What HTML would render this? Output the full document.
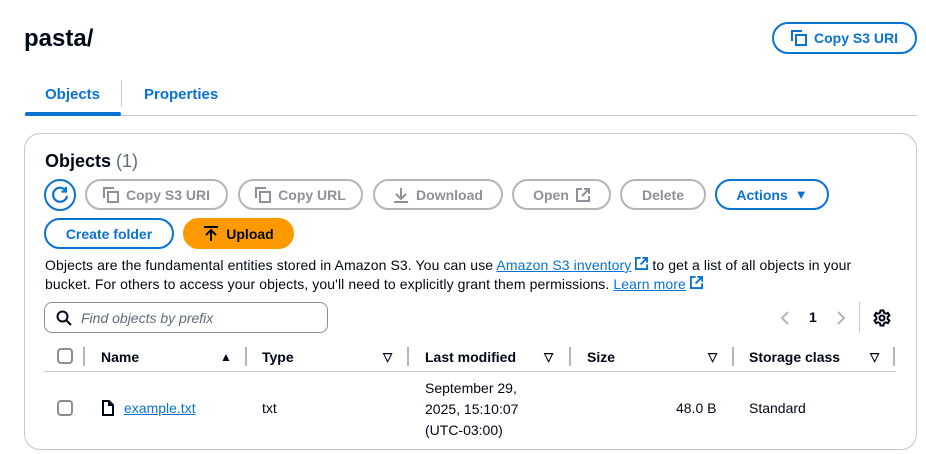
<!DOCTYPE html>
<html><head><meta charset="utf-8"><style>
*{box-sizing:border-box;margin:0;padding:0}
body{width:926px;height:454px;background:#fff;font-family:"Liberation Sans",sans-serif;color:#000716;position:relative;overflow:hidden;font-size:14px}
.a{position:absolute;white-space:nowrap}
.btn{position:absolute;height:31px;border:2px solid #b4b4bb;border-radius:16px;color:#8d9199;font-weight:bold;font-size:14px;display:flex;align-items:center;justify-content:center;gap:7px}
.blue{border-color:#0972d3;color:#0972d3}
.cb{position:absolute;width:16px;height:16px;border:2px solid #8c8c94;border-radius:4px}
.th{position:absolute;top:349px;font-weight:bold;font-size:14px}
.dv{position:absolute;top:347px;width:2px;height:19px;background:#b4b4bb}
.ar{position:absolute;top:350px;font-size:12px;font-weight:bold}
a{color:#0972d3;text-decoration:underline}
</style></head><body>
<div class="a" style="left:24px;top:25px;font-size:24px;font-weight:bold">pasta/</div>
<div class="btn blue" style="left:772px;top:22px;width:145px;height:32px">
<svg width="16" height="16" viewBox="0 0 16 16" fill="none" stroke="#0972d3" stroke-width="2"><path d="M1 11V1h10"/><rect x="5" y="5" width="10" height="10"/></svg>Copy S3 URI</div>
<div class="a" style="left:45px;top:86px;font-weight:bold;font-size:15px;color:#0972d3">Objects</div>
<div class="a" style="left:121px;top:80px;width:1px;height:27px;background:#c6c6cd"></div>
<div class="a" style="left:144px;top:86px;font-weight:bold;font-size:15px;color:#0972d3">Properties</div>
<div class="a" style="left:24px;top:115px;width:893px;height:1px;background:#c6c6cd"></div>
<div class="a" style="left:25px;top:112px;width:96px;height:4px;background:#0972d3;border-radius:2px"></div>

<div class="a" style="left:24px;top:133px;width:893px;height:317px;border:1px solid #c6c6cd;border-radius:16px"></div>
<div class="a" style="left:45px;top:151px;font-size:18px;font-weight:bold">Objects <span style="font-weight:normal;color:#5f6b7a">(1)</span></div>

<div class="a" style="left:44px;top:179px;width:32px;height:32px;border:2px solid #0972d3;border-radius:50%"><svg width="28" height="28" viewBox="0 0 28 28" fill="none" stroke="#0972d3" stroke-width="2.2"><path d="M20 10A7 7 0 1 0 21 15"/><path d="M20 6v4.5h-4.5"/></svg></div>
<div class="btn" style="left:85px;top:179px;width:143px"><svg width="16" height="16" viewBox="0 0 16 16" fill="none" stroke="#8d9199" stroke-width="2"><path d="M1 11V1h10"/><rect x="5" y="5" width="10" height="10"/></svg>Copy S3 URI</div>
<div class="btn" style="left:238px;top:179px;width:125px"><svg width="16" height="16" viewBox="0 0 16 16" fill="none" stroke="#8d9199" stroke-width="2"><path d="M1 11V1h10"/><rect x="5" y="5" width="10" height="10"/></svg>Copy URL</div>
<div class="btn" style="left:373px;top:179px;width:130px"><svg width="16" height="16" viewBox="0 0 16 16" fill="none" stroke="#8d9199" stroke-width="2"><path d="M8 1v10M3 7l5 5 5-5M1 15h14"/></svg>Download</div>
<div class="btn" style="left:512px;top:179px;width:99px">Open <svg width="14" height="14" viewBox="0 0 14 14" fill="none" stroke="#8d9199" stroke-width="2"><path d="M6 1H1v12h12V8M8 1h5v5M13 1L6 8"/></svg></div>
<div class="btn" style="left:620px;top:179px;width:86px">Delete</div>
<div class="btn blue" style="left:715px;top:179px;width:114px">Actions <span style="font-size:13px">▼</span></div>

<div class="btn blue" style="left:44px;top:218px;width:130px">Create folder</div>
<div class="btn" style="left:183px;top:218px;width:111px;background:#ff9900;border-color:#ff9900;color:#000716"><svg width="16" height="16" viewBox="0 0 16 16" fill="none" stroke="#000716" stroke-width="2"><path d="M1 1h14M8 15V5M3 9l5-5 5 5"/></svg>Upload</div>

<div class="a" style="left:45px;top:256px;line-height:19px;font-size:14px;letter-spacing:0.1px">Objects are the fundamental entities stored in Amazon S3. You can use <a>Amazon S3 inventory</a> <svg width="13" height="13" viewBox="0 0 14 14" fill="none" stroke="#0972d3" stroke-width="2"><path d="M6 1H1v12h12V8M8 1h5v5M13 1L6 8"/></svg> to get a list of all objects in your<br>bucket. For others to access your objects, you'll need to explicitly grant them permissions. <a>Learn more</a> <svg width="13" height="13" viewBox="0 0 14 14" fill="none" stroke="#0972d3" stroke-width="2"><path d="M6 1H1v12h12V8M8 1h5v5M13 1L6 8"/></svg></div>

<div class="a" style="left:44px;top:302px;width:284px;height:31px;border:1px solid #8c8c94;border-radius:8px"></div>
<svg class="a" style="left:56px;top:310px" width="16" height="16" viewBox="0 0 16 16" fill="none" stroke="#000716" stroke-width="2"><circle cx="6.5" cy="6.5" r="5"/><path d="M10 10l5 5"/></svg>
<div class="a" style="left:81px;top:310px;font-style:italic;color:#5f6b7a;font-size:14px">Find objects by prefix</div>
<svg class="a" style="left:779px;top:310px" width="12" height="16" viewBox="0 0 12 16" fill="none" stroke="#b4b4bb" stroke-width="2"><path d="M9 2L3 8l6 6"/></svg>
<div class="a" style="left:809px;top:309px;font-weight:bold">1</div>
<svg class="a" style="left:835px;top:310px" width="12" height="16" viewBox="0 0 12 16" fill="none" stroke="#b4b4bb" stroke-width="2"><path d="M3 2l6 6-6 6"/></svg>
<div class="a" style="left:859px;top:302px;width:1px;height:31px;background:#c6c6cd"></div>
<svg class="a" style="left:873px;top:309px" width="18" height="18" viewBox="0 0 18 18" fill="none" stroke="#000716" stroke-width="2"><circle cx="9" cy="9" r="2.5"/><path d="M7.5 1.5h3l.5 2.2 1.8 1 2.1-.8 1.5 2.6-1.7 1.5v2l1.7 1.5-1.5 2.6-2.1-.8-1.8 1-.5 2.2h-3l-.5-2.2-1.8-1-2.1.8-1.5-2.6 1.7-1.5v-2L1.6 6.5l1.5-2.6 2.1.8 1.8-1z"/></svg>

<div class="cb" style="left:57px;top:348px"></div>
<div class="dv" style="left:83px"></div>
<div class="th" style="left:101px">Name</div><div class="ar" style="left:220px">▲</div><div class="dv" style="left:245px"></div>
<div class="th" style="left:262px">Type</div><div class="ar" style="left:383px">▽</div><div class="dv" style="left:407px"></div>
<div class="th" style="left:425px">Last modified</div><div class="ar" style="left:544px">▽</div><div class="dv" style="left:569px"></div>
<div class="th" style="left:587px">Size</div><div class="ar" style="left:708px">▽</div><div class="dv" style="left:732px"></div>
<div class="th" style="left:749px">Storage class</div><div class="ar" style="left:870px">▽</div><div class="dv" style="left:893px"></div>
<div class="a" style="left:44px;top:371px;width:852px;height:1px;background:#c6c6cd"></div>

<div class="cb" style="left:57px;top:400px"></div>
<svg class="a" style="left:102px;top:400px" width="12" height="16" viewBox="0 0 12 16" fill="none" stroke="#000716" stroke-width="2"><path d="M1 1h6l4 4v10H1z M7 1v4h4"/></svg>
<div class="a" style="left:124px;top:400px"><a>example.txt</a></div>
<div class="a" style="left:262px;top:400px">txt</div>
<div class="a" style="left:425px;top:378px;line-height:21px">September 29,<br>2025, 15:10:07<br>(UTC-03:00)</div>
<div class="a" style="left:676px;top:400px">48.0 B</div>
<div class="a" style="left:749px;top:400px">Standard</div>
</body></html>
